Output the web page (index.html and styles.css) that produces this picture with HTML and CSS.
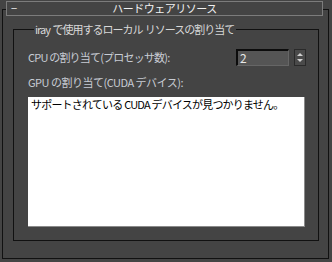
FILE: index.html
```html
<html>
    <head>
        <meta charset="utf-8">
        <title>ハードウェアリソース</title>
        <link rel="stylesheet" href="styles.css">
    </head>
    <body>
        <div class="rollout">
            <div class="rollout-title">
                <span class="collapse">−</span>
                <span class="title-text">ハードウェアリソース</span>
            </div>
            <fieldset class="group">
                <legend>iray で使用するローカル リソースの割り当て</legend>
                <div class="row">
                    <span class="label">CPU の割り当て(プロセッサ数):</span>
                    <div class="spinner">
                        <div class="spin-field">2</div>
                        <div class="spin-buttons">
                            <span class="arrow up"></span>
                            <span class="arrow down"></span>
                        </div>
                    </div>
                </div>
                <div class="label gpu">GPU の割り当て(CUDA デバイス):</div>
                <div class="listbox">サポートされている CUDA デバイスが見つかりません。</div>
            </fieldset>
        </div>
    </body>
</html>
```

FILE: styles.css
```css
* {
    box-sizing: border-box;
}
body {
    margin: 0;
    background: #444444;
    font-family: "Noto Sans CJK JP", "Noto Sans", sans-serif;
    font-size: 11px;
    letter-spacing: -0.8px;
    color: #d8d8d8;
    width: 332px;
    height: 262px;
    overflow: hidden;
    display: flex;
    flex-direction: column;
}
.rollout {
    margin: 9px 3px 3px 2px;
    flex: 1;
    border: 1px solid #111111;
    display: flex;
    flex-direction: column;
}
.rollout-title {
    margin: -9px 5px 0 3px;
    height: 15px;
    border: 1px solid #7c7c7c;
    background: #444444;
    display: flex;
    align-items: center;
    line-height: 13px;
    color: #f0f0f0;
}
.collapse {
    width: 16px;
    padding-left: 4px;
}
.title-text {
    flex: 1;
    text-align: center;
    padding-right: 16px;
    letter-spacing: -0.5px;
}
.group {
    margin: 7px 9px 17px 10px;
    flex: 1;
    min-width: 0;
    border: 1px solid #111111;
    padding: 13px 12px 0 14px;
}
.group legend {
    padding: 0 2px 0 1px;
    margin-left: 6px;
    line-height: 12px;
    letter-spacing: -1px;
    word-spacing: 1px;
}
.row {
    display: flex;
    align-items: center;
    justify-content: space-between;
    height: 18px;
}
.label {
    color: #c8ccd4;
    line-height: 12px;
}
.spinner {
    display: flex;
    align-items: center;
    gap: 5px;
}
.spin-field {
    width: 53px;
    height: 17px;
    background: #555555;
    border-top: 2px solid #0c0c0c;
    border-left: 2px solid #0c0c0c;
    border-right: 1px solid #666666;
    border-bottom: 1px solid #666666;
    padding-left: 2px;
    line-height: 13px;
    color: #e8e8e8;
    font-size: 12px;
}
.spin-buttons {
    width: 12px;
    height: 17px;
    border: 1px solid #2a2a2a;
    background: #4a4a4a;
    display: flex;
    flex-direction: column;
    align-items: center;
    justify-content: center;
    gap: 3px;
}
.arrow {
    width: 0;
    height: 0;
    border-left: 3px solid transparent;
    border-right: 3px solid transparent;
}
.arrow.up {
    border-bottom: 3px solid #d0d0d0;
}
.arrow.down {
    border-top: 3px solid #d0d0d0;
}
.gpu {
    margin-top: 10px;
    letter-spacing: -0.5px;
}
.listbox {
    margin-top: 9px;
    width: 277px;
    height: 130px;
    background: #ffffff;
    border-right: 1px solid #8a8a8a;
    border-bottom: 1px solid #8a8a8a;
    color: #000000;
    padding: 1px 3px;
    line-height: 13px;
}
```
